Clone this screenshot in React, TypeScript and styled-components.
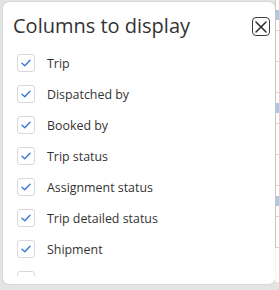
import { createGlobalStyle, styled } from 'styled-components';

const columns = [
  'Trip',
  'Dispatched by',
  'Booked by',
  'Trip status',
  'Assignment status',
  'Trip detailed status',
  'Shipment',
  'Carrier',
];

const GlobalStyle = createGlobalStyle`
  html, body {
    margin: 0;
    padding: 0;
    background: #e4e4e4;
  }

  body {
    font-family: 'Segoe UI', 'Open Sans', 'Noto Sans', sans-serif;
  }
`;

const CheckIcon = () => (
  <svg width="10" height="8" viewBox="0 0 10 8" fill="none">
    <path d="M1 4.2 L3.8 6.8 L9 1.2" stroke="#3a78d4" strokeWidth="1.4" strokeLinecap="round" strokeLinejoin="round" />
  </svg>
);

const CloseIcon = () => (
  <svg width="12" height="12" viewBox="0 0 12 12" fill="none">
    <path d="M1 1 L11 11 M11 1 L1 11" stroke="#2b2b2b" strokeWidth="1.5" strokeLinecap="round" />
  </svg>
);

const App = () => (
  <>
    <GlobalStyle />
    <S.PageLayout>
      <S.TableStrip>
        {columns.map((_, index) => (
          <S.TableCell key={index} $mark={index % 3 === 0} />
        ))}
      </S.TableStrip>
      <S.PanelBox>
        <S.HeaderBox>
          <S.TitleSpan>Columns to display</S.TitleSpan>
          <S.CloseButton aria-label="Close">
            <CloseIcon />
          </S.CloseButton>
        </S.HeaderBox>
        <S.ListBox>
          {columns.map((item) => (
            <S.RowLabel key={item}>
              <S.CheckBox>
                <CheckIcon />
              </S.CheckBox>
              <S.LabelSpan>{item}</S.LabelSpan>
            </S.RowLabel>
          ))}
        </S.ListBox>
      </S.PanelBox>
    </S.PageLayout>
  </>
);

export default App;

const PageLayout = styled.div`
  position: relative;

  width: 279px;
  height: 290px;
  overflow: hidden;
`;

const TableStrip = styled.div`
  position: absolute;
  top: 0;
  right: 0;
  bottom: 8px;

  display: flex;
  flex-direction: column;

  width: 4px;
  background: #ffffff;
`;

const TableCell = styled.div<{ $mark: boolean }>`
  height: 30px;
  border-bottom: 1px solid #d6d6d6;
  border-left: 1px solid #d0d0d0;
  background: ${({ $mark }) => ($mark ? 'linear-gradient(#ffffff 10px, #a9cbe8 10px, #a9cbe8 20px, #ffffff 20px)' : '#ffffff')};
`;

const PanelBox = styled.div`
  position: absolute;
  top: 2px;
  left: 3px;

  display: flex;
  flex-direction: column;

  width: 272px;
  height: 282px;
  border-radius: 6px;

  background: #ffffff;
  box-shadow: 0 0 2px rgba(0, 0, 0, 0.18);
`;

const HeaderBox = styled.div`
  display: flex;
  justify-content: space-between;
  align-items: center;

  padding: 11px 5px 0 10px;
`;

const TitleSpan = styled.span`
  color: #333333;
  font-size: 20px;
  line-height: 26px;
`;

const CloseButton = styled.button`
  display: flex;
  justify-content: center;
  align-items: center;

  width: 18px;
  height: 19px;
  margin-top: 1px;
  padding: 0;
  border: 1.5px solid #3c3c3c;
  border-radius: 4px;

  background: #ffffff;
  cursor: pointer;
`;

const ListBox = styled.div`
  display: flex;
  flex-direction: column;
  gap: 13px;

  height: 222px;
  margin-top: 15px;
  padding-left: 14px;
  overflow: hidden;
`;

const RowLabel = styled.label`
  display: flex;
  gap: 12px;
  align-items: center;

  height: 18px;
  flex-shrink: 0;
`;

const CheckBox = styled.span`
  display: flex;
  justify-content: center;
  align-items: center;

  width: 16px;
  height: 16px;
  border: 1px solid #d9d9d9;
  border-radius: 3px;

  background: #ffffff;
`;

const LabelSpan = styled.span`
  color: #333333;
  font-size: 12.4px;
`;

const S = {
  PageLayout,
  TableStrip,
  TableCell,
  PanelBox,
  HeaderBox,
  TitleSpan,
  CloseButton,
  ListBox,
  RowLabel,
  CheckBox,
  LabelSpan,
};
